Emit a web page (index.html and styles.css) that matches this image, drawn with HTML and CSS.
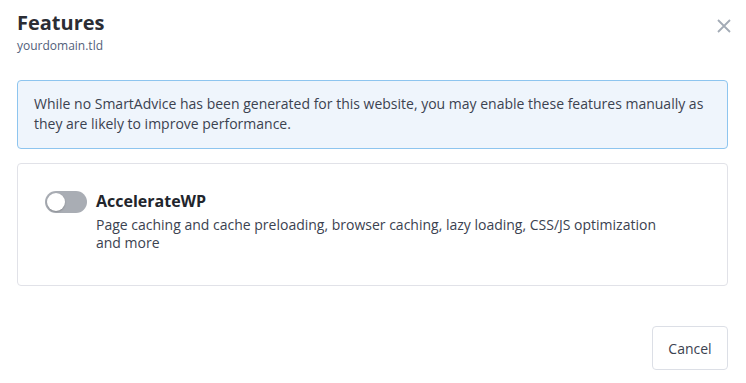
FILE: index.html
```html
<!doctype html>
<html lang="en">
  <head>
    <meta charset="UTF-8" />
    <meta name="viewport" content="width=device-width, initial-scale=1.0" />
    <title>Features</title>
    <link rel="stylesheet" href="styles.css">
  </head>
  <body>
    <div class="modal">
      <header class="modal-header">
        <div class="title">
          <h1 class="modal-title">Features</h1>
          <span class="modal-subtitle">yourdomain.tld</span>
        </div>
        <button class="close" aria-label="Close">
          <svg width="14" height="14" viewBox="0 0 14 14">
            <path d="M1 1 L13 13 M13 1 L1 13" stroke="#a3abb6" stroke-width="1.8" fill="none" />
          </svg>
        </button>
      </header>
      <main class="modal-body">
        <div class="notice">
          While no SmartAdvice has been generated for this website, you may enable these features manually as they are likely to improve performance.
        </div>
        <div class="feature">
          <div class="toggle"><span class="knob"></span></div>
          <div class="feature-info">
            <span class="feature-name">AccelerateWP</span>
            <p class="feature-desc">Page caching and cache preloading, browser caching, lazy loading, CSS/JS optimization and more</p>
          </div>
        </div>
      </main>
      <footer class="modal-footer">
        <button class="btn">Cancel</button>
      </footer>
    </div>
  </body>
</html>
```

FILE: styles.css
```css
* {
  margin: 0;
  padding: 0;
  box-sizing: border-box;
}
body {
  background-color: #fff;
  color: #3b4250;
  font-family: "Open Sans", "Noto Sans", sans-serif;
  width: 746px;
  height: 383px;
  overflow: hidden;
}
.modal {
  padding: 10px 18px 13px 17px;
}
.modal-header {
  display: flex;
  justify-content: space-between;
  align-items: flex-start;
}
.modal-header .title {
  display: flex;
  flex-direction: column;
}
.modal-title {
  font-size: 20px;
  font-weight: 700;
  line-height: 26px;
  color: #2b2d34;
}
.modal-subtitle {
  font-size: 12px;
  line-height: 18px;
  margin-top: 1px;
  color: #52607a;
}
.close {
  border: none;
  background: none;
  margin: 6px -6px 0 0;
  width: 20px;
  height: 20px;
  display: flex;
  align-items: center;
  justify-content: center;
  cursor: pointer;
}
.modal-body {
  margin-top: 25px;
}
.notice {
  background-color: #eff5fc;
  border: 1px solid #8ec5ef;
  border-radius: 4px;
  padding: 13px 16px 14px;
  font-size: 14px;
  line-height: 20px;
  color: #3b4250;
}
.feature {
  display: flex;
  align-items: flex-start;
  margin-top: 14px;
  border: 1px solid #e1e2e8;
  border-radius: 4px;
  padding: 26px 20px 33px 27px;
}
.toggle {
  flex: none;
  width: 42px;
  height: 22px;
  border-radius: 11px;
  background-color: #a9adb4;
  margin-top: 1px;
  margin-right: 9px;
  padding: 2px;
}
.toggle .knob {
  display: block;
  width: 18px;
  height: 18px;
  border-radius: 50%;
  background-color: #fff;
  box-shadow: 0 1px 2px rgba(0, 0, 0, 0.2);
}
.feature-info {
  max-width: 580px;
}
.feature-name {
  display: block;
  font-size: 16px;
  font-weight: 700;
  line-height: 22px;
  color: #22252c;
}
.feature-desc {
  margin-top: 4px;
  font-size: 14px;
  line-height: 18px;
  color: #3b4250;
}
.modal-footer {
  display: flex;
  justify-content: flex-end;
  margin-top: 40px;
}
.btn {
  font-family: inherit;
  font-size: 14px;
  color: #3b4250;
  background-color: #fff;
  border: 1px solid #dcdfe6;
  border-radius: 4px;
  width: 76px;
  height: 44px;
  cursor: pointer;
}
```
